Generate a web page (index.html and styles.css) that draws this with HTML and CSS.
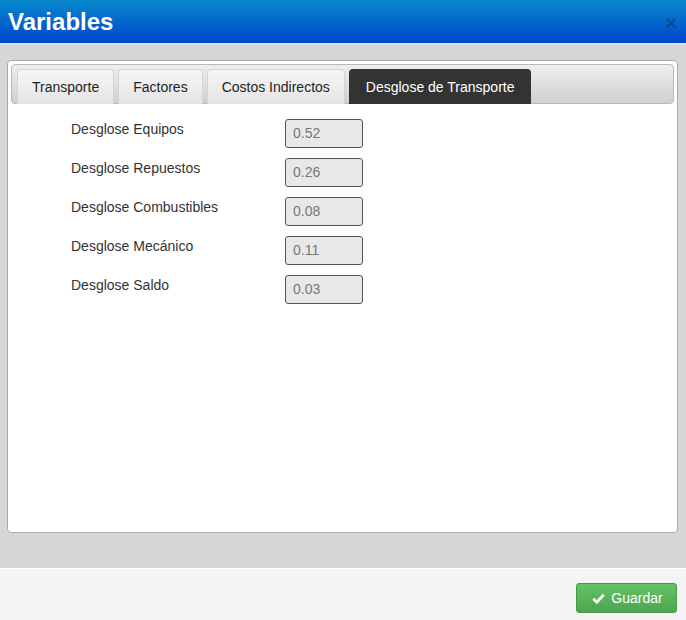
FILE: index.html
```html
<!DOCTYPE html>
<html lang="es">
<head>
<meta charset="utf-8">
<title>Variables</title>
<link rel="stylesheet" href="styles.css">
</head>
<body>
<div class="modal">
  <div class="header">
    <h3 class="title">Variables</h3>
    <span class="close">×</span>
  </div>
  <div class="body">
    <div class="panel">
      <ul class="tabs">
        <li class="tab">Transporte</li>
        <li class="tab">Factores</li>
        <li class="tab">Costos Indirectos</li>
        <li class="tab active">Desglose de Transporte</li>
      </ul>
      <div class="form">
        <div class="row"><label class="label">Desglose Equipos</label><div class="input">0.52</div></div>
        <div class="row"><label class="label">Desglose Repuestos</label><div class="input">0.26</div></div>
        <div class="row"><label class="label">Desglose Combustibles</label><div class="input">0.08</div></div>
        <div class="row"><label class="label">Desglose Mecánico</label><div class="input">0.11</div></div>
        <div class="row"><label class="label">Desglose Saldo</label><div class="input">0.03</div></div>
      </div>
    </div>
  </div>
  <div class="footer">
    <button class="btn">
      <svg class="check" width="13" height="11" viewBox="0 0 13 11"><path d="M1.3 5.8 L4.8 9.2 L11.7 1.8" fill="none" stroke="#fff" stroke-width="2.8" stroke-linecap="butt" stroke-linejoin="miter"/></svg>
      <span>Guardar</span>
    </button>
  </div>
</div>
</body>
</html>
```

FILE: styles.css
```css
html, body {
  margin: 0;
  padding: 0;
}
body {
  width: 686px;
  height: 620px;
  font-family: "Liberation Sans", Arial, sans-serif;
  overflow: hidden;
}
.modal {
  display: flex;
  flex-direction: column;
  height: 620px;
}
.header {
  height: 43px;
  background: linear-gradient(#0889cb, #0044cb);
  border-bottom: 1px solid #e8e8e8;
  display: flex;
  align-items: center;
  justify-content: space-between;
  padding: 0 9px 0 8px;
}
.title {
  margin: 0;
  color: #fff;
  font-size: 24px;
  font-weight: bold;
  line-height: 40px;
}
.close {
  font-size: 20px;
  font-weight: bold;
  color: #000;
  opacity: 0.25;
  line-height: 20px;
  margin-top: 2px;
}
.body {
  flex: 1;
  background: #d6d6d6;
  padding: 16px 8px 35px 7px;
  display: flex;
}
.panel {
  flex: 1;
  background: #fff;
  border: 1px solid #aaaaaa;
  border-radius: 4px;
  display: flex;
  flex-direction: column;
}
.tabs {
  list-style: none;
  margin: 3px 3px 0;
  padding: 3px 3px 0 5px;
  height: 35px;
  border: 1px solid #b9b9b9;
  border-radius: 4px;
  background: linear-gradient(#eeeeee, #d0d0d0);
  display: flex;
  gap: 4px;
  align-items: flex-end;
}
.tab {
  height: 35px;
  box-sizing: border-box;
  margin-bottom: -1px;
  padding: 0 14px;
  border: 1px solid #d4d4d4;
  border-bottom: none;
  border-radius: 4px 4px 0 0;
  background: linear-gradient(#f5f5f5 0%, #ededed 55%, #e3e3e3 100%);
  font-size: 14px;
  line-height: 35px;
  color: #222;
}
.tab.active {
  background: #333333;
  border-color: #333333;
  color: #fff;
  padding: 0 16px;
}
.form {
  padding: 15px 0 0 63px;
  display: flex;
  flex-direction: column;
  gap: 10px;
}
.row {
  display: grid;
  grid-template-columns: 214px 78px;
  align-items: start;
}
.label {
  font-size: 14px;
  line-height: 16px;
  color: #333;
  padding-top: 2px;
}
.input {
  box-sizing: border-box;
  width: 78px;
  height: 29px;
  border: 1px solid #555;
  border-radius: 3px;
  background: #e8e8e8;
  color: #777;
  font-size: 14px;
  line-height: 27px;
  padding-left: 7px;
}
.footer {
  background: #f4f4f4;
  border-top: 1px solid #ffffff;
  display: flex;
  justify-content: flex-end;
  align-items: flex-start;
  padding: 14px 9px 0 0;
  box-sizing: border-box;
  height: 52px;
}
.btn {
  width: 101px;
  height: 30px;
  box-sizing: border-box;
  border: 1px solid #449d44;
  border-radius: 3px;
  background: linear-gradient(#62c462, #51a351);
  color: #fff;
  font-family: "Liberation Sans", Arial, sans-serif;
  font-size: 14px;
  display: flex;
  align-items: center;
  justify-content: center;
  gap: 6px;
  padding: 0 0 0 2px;
}
.check {
  display: block;
}
```
